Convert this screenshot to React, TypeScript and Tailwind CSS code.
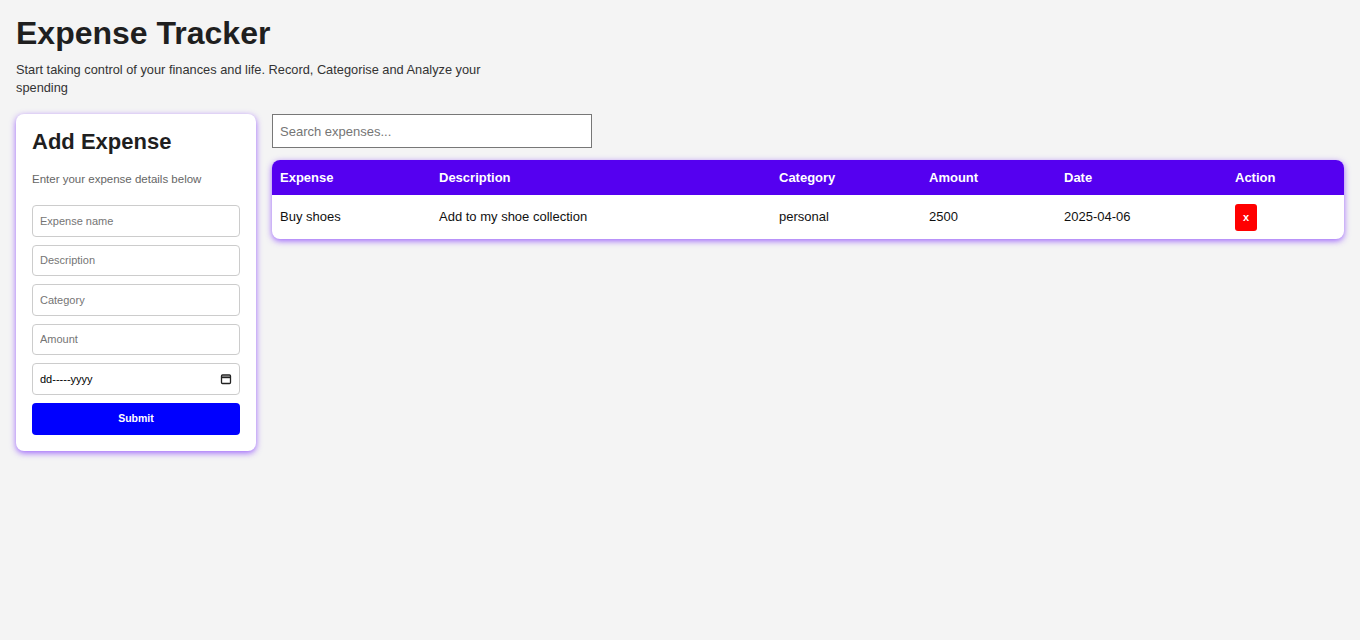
import React from "react";

const expenses = [
  { name: "Buy shoes", description: "Add to my shoe collection", category: "personal", amount: 2500, date: "2025-04-06" },
];

const fields = ["Expense name", "Description", "Category", "Amount"];

export default function App() {
  return (
    <div className="min-h-screen bg-[#f4f4f4] p-4 font-['Liberation_Sans',Arial,sans-serif] text-[#222]">
      <h1 className="text-[32px] font-bold leading-[34px] text-[#1f1f1f]">Expense Tracker</h1>
      <p className="mt-[11px] max-w-[500px] text-[12.8px] leading-[18px] text-[#333]">
        Start taking control of your finances and life. Record, Categorise and Analyze your spending
      </p>
      <div className="mt-[17px] flex items-start gap-4">
        <form className="w-[240px] shrink-0 rounded-lg bg-white p-4 shadow-[0_2px_6px_rgba(120,40,255,0.7)]">
          <h2 className="text-[22px] font-bold leading-[24px] text-[#1f1f1f]">Add Expense</h2>
          <p className="mt-[17px] text-[11.5px] leading-[16px] text-[#666]">Enter your expense details below</p>
          <div className="mt-[18px] flex flex-col gap-2">
            {fields.map((f) => (
              <input
                key={f}
                placeholder={f}
                className="h-[31.5px] w-full rounded border border-[#ccc] bg-white px-[7px] text-[11px] placeholder:text-[#757575]"
              />
            ))}
            <div className="flex h-[31.5px] w-full items-center justify-between rounded border border-[#ccc] bg-white px-[7px] text-[11px] text-black">
              <span>dd-----yyyy</span>
              <svg width="12" height="12" viewBox="0 0 12 12" fill="none" stroke="#222" strokeWidth="1.3">
                <rect x="1.5" y="2" width="9" height="8.5" rx="1" />
                <line x1="1.5" y1="4.3" x2="10.5" y2="4.3" strokeWidth="1.8" />
              </svg>
            </div>
            <button type="button" className="h-[32px] w-full rounded bg-[#0000ff] text-[10.5px] font-bold text-white">
              Submit
            </button>
          </div>
        </form>
        <div className="flex-1">
          <input
            placeholder="Search expenses..."
            className="h-[34px] w-[320px] border border-[#777] bg-white px-[7px] text-[13px] placeholder:text-[#757575]"
          />
          <div className="mt-3 overflow-hidden rounded-lg bg-white shadow-[0_2px_6px_rgba(120,40,255,0.7)]">
            <table className="w-full border-collapse text-left text-[13px]">
              <thead>
                <tr className="h-[35px] bg-[#5500f0] text-white">
                  <th className="w-[159px] px-2 font-bold">Expense</th>
                  <th className="w-[340px] px-2 font-bold">Description</th>
                  <th className="w-[150px] px-2 font-bold">Category</th>
                  <th className="w-[135px] px-2 font-bold">Amount</th>
                  <th className="w-[171px] px-2 font-bold">Date</th>
                  <th className="px-2 font-bold">Action</th>
                </tr>
              </thead>
              <tbody>
                {expenses.map((e) => (
                  <tr key={e.name} className="h-[44px] text-[#111]">
                    <td className="px-2">{e.name}</td>
                    <td className="px-2">{e.description}</td>
                    <td className="px-2">{e.category}</td>
                    <td className="px-2">{e.amount}</td>
                    <td className="px-2">{e.date}</td>
                    <td className="px-2">
                      <button type="button" className="h-[27px] w-[22px] rounded-[3px] bg-[#ff0000] text-[11px] font-bold text-white">
                        x
                      </button>
                    </td>
                  </tr>
                ))}
              </tbody>
            </table>
          </div>
        </div>
      </div>
    </div>
  );
}
